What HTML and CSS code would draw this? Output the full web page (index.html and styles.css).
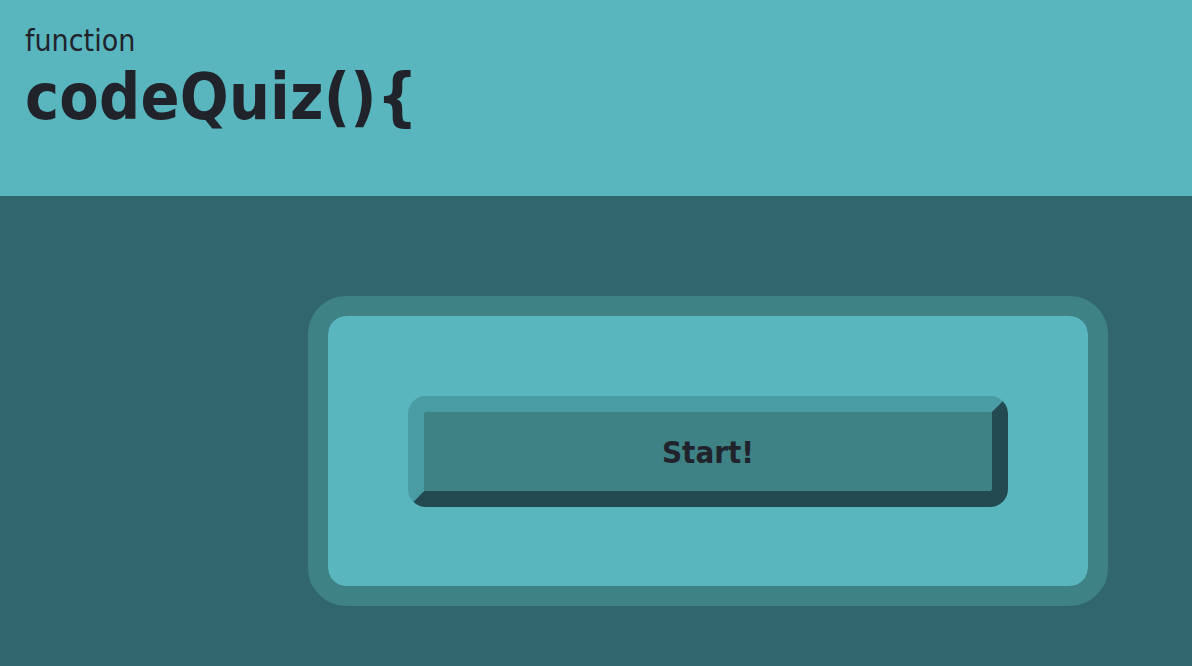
FILE: index.html
```html
<!DOCTYPE html>
<html lang="en">
<head>
<meta charset="utf-8">
<title>codeQuiz</title>
<link rel="stylesheet" href="styles.css">
</head>
<body>
<header class="top">
  <div class="kw">function</div>
  <h1 class="title">codeQuiz(){</h1>
</header>
<main class="stage">
  <section class="card">
    <button class="start" type="button">Start!</button>
  </section>
</main>
</body>
</html>
```
FILE: styles.css
```css
html, body {
  margin: 0;
  padding: 0;
  height: 100%;
}
body {
  background: #31666c;
  font-family: "DejaVu Sans Condensed", "DejaVu Sans", sans-serif;
  color: #21232b;
  display: flex;
  flex-direction: column;
}
.top {
  background: #59b5be;
  height: 196px;
  box-sizing: border-box;
  padding: 24px 0 0 25px;
}
.kw {
  font-size: 30px;
  line-height: 34px;
  font-weight: normal;
}
.title {
  margin: 3px 0 0 0;
  font-size: 64px;
  line-height: 72px;
  font-weight: bold;
  letter-spacing: 0.2px;
}
.stage {
  flex: 1;
  padding: 100px 0 0 308px;
}
.card {
  box-sizing: border-box;
  width: 800px;
  height: 310px;
  padding: 80px;
  border: 20px solid #3e8286;
  border-radius: 38px;
  background: #59b5be;
  background-clip: padding-box;
}
.start {
  display: flex;
  align-items: center;
  justify-content: center;
  width: 600px;
  height: 111px;
  margin: 0;
  padding: 0;
  box-sizing: border-box;
  border-style: solid;
  border-width: 16px;
  border-color: #4a9ca4 #234a50 #234a50 #4a9ca4;
  border-radius: 18px;
  background: #3e8286;
  font-family: "DejaVu Sans Condensed", "DejaVu Sans", sans-serif;
  font-weight: bold;
  font-size: 31px;
  color: #21232b;
  cursor: pointer;
}
```
